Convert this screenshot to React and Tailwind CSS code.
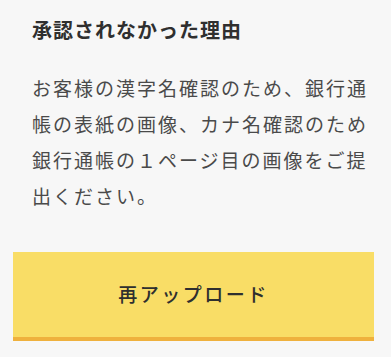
import React from "react";

export default function App() {
  return (
    <div
      className="w-full h-[357px] bg-[#f7f7f7] overflow-hidden"
      style={{ fontFamily: '"Noto Sans CJK JP", "Noto Sans", sans-serif' }}
    >
      <div className="pl-8 pr-[20px] pt-[15px]">
        <h2 className="text-[20px] leading-[30px] font-bold tracking-[1px] text-[#2f2f2f]">
          承認されなかった理由
        </h2>
        <p className="mt-[25px] text-[19px] leading-[36px] tracking-[2px] text-[#4a4a4a]">
          お客様の漢字名確認のため、銀行通帳の表紙の画像、カナ名確認のため銀行通帳の１ページ目の画像をご提出ください。
        </p>
      </div>
      <button className="mt-[38px] ml-[13px] w-[361px] h-[89px] bg-[#f9dd66] border-b-4 border-[#efb13d] flex items-center justify-center text-[19px] font-medium tracking-[2.5px] text-[#2f2f2f]">
        再アップロード
      </button>
    </div>
  );
}
